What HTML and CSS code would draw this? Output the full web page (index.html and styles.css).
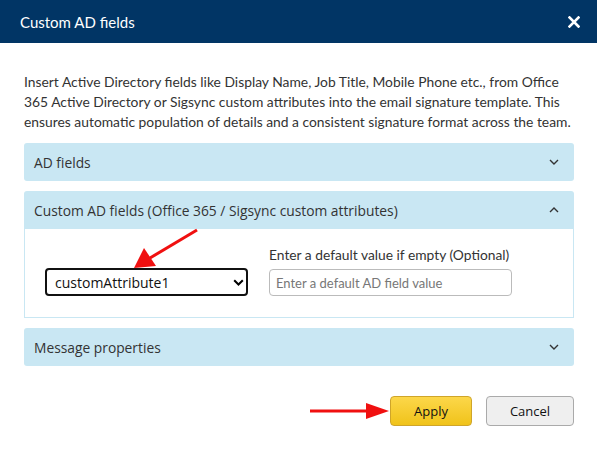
FILE: index.html
```html
<!DOCTYPE html>
<html>
<head>
<meta charset="utf-8">
<link rel="stylesheet" href="styles.css">
</head>
<body>
<div class="modal">
  <div class="modal-header">
    <span class="modal-title">Custom AD fields</span>
    <svg class="close" width="12" height="12" viewBox="0 0 12 12"><path d="M1.5 1.5L10.5 10.5M10.5 1.5L1.5 10.5" stroke="#fff" stroke-width="2.6" stroke-linecap="square"/></svg>
  </div>
  <div class="modal-body">
    <p class="intro">Insert Active Directory fields like Display Name, Job Title, Mobile Phone etc., from Office 365 Active Directory or Sigsync custom attributes into the email signature template. This ensures automatic population of details and a consistent signature format across the team.</p>

    <div class="panel">
      <div class="panel-head"><span>AD fields</span><svg class="chev" width="10" height="6" viewBox="0 0 10 6"><path d="M1 1L5 5L9 1" fill="none" stroke="#333" stroke-width="1.4"/></svg></div>
    </div>

    <div class="panel open">
      <div class="panel-head"><span>Custom AD fields (Office 365 / Sigsync custom attributes)</span><svg class="chev" width="10" height="6" viewBox="0 0 10 6"><path d="M1 5L5 1L9 5" fill="none" stroke="#333" stroke-width="1.4"/></svg></div>
      <div class="panel-body">
        <div class="field">
          <div class="select">
            <span>customAttribute1</span>
            <svg width="11" height="7" viewBox="0 0 11 7"><path d="M1.2 1.2L5.5 5.5L9.8 1.2" fill="none" stroke="#000" stroke-width="2"/></svg>
          </div>
        </div>
        <div class="field">
          <label class="label">Enter a default value if empty (Optional)</label>
          <div class="input">Enter a default AD field value</div>
        </div>
      </div>
    </div>

    <div class="panel">
      <div class="panel-head"><span>Message properties</span><svg class="chev" width="10" height="6" viewBox="0 0 10 6"><path d="M1 1L5 5L9 1" fill="none" stroke="#333" stroke-width="1.4"/></svg></div>
    </div>

    <div class="actions">
      <button class="btn btn-apply">Apply</button>
      <button class="btn btn-cancel">Cancel</button>
    </div>
  </div>
  <svg class="arrows" width="597" height="451" viewBox="0 0 597 451">
    <line x1="197" y1="230" x2="150" y2="258" stroke="#f01010" stroke-width="3"/>
    <polygon points="134,268 144,248 156,266" fill="#f01010"/>
    <line x1="310" y1="411" x2="368" y2="411" stroke="#f01010" stroke-width="3"/>
    <polygon points="389,411 366,403 366,419" fill="#f01010"/>
  </svg>
</div>
</body>
</html>
```

FILE: styles.css
```css
* { box-sizing: border-box; }
html, body { margin: 0; padding: 0; background: #fff; }
.modal {
  position: relative;
  width: 597px;
  height: 451px;
  font-family: Lato, "Liberation Sans", sans-serif;
  color: #333;
}
.modal-header {
  height: 43px;
  background: #013565;
  display: flex;
  align-items: center;
  justify-content: space-between;
  padding: 0 17px 0 20px;
}
.modal-title {
  color: #fff;
  font-size: 15px;
  font-family: Lato, sans-serif;
}
.close { display: block; }
.modal-body {
  padding: 29px 23px 0 24px;
}
.intro {
  margin: 0 0 11px 0;
  font-size: 13.85px;
  line-height: 20px;
  color: #333;
}
.panel {
  margin-bottom: 10px;
}
.panel-head {
  height: 38px;
  background: #c9e7f3;
  border-radius: 3px;
  display: flex;
  align-items: center;
  justify-content: space-between;
  padding: 0 15px 0 10px;
  font-family: "Open Sans", "Noto Sans", sans-serif;
  font-size: 13.8px;
  color: #333;
}
.panel.open .panel-head {
  border-radius: 3px 3px 0 0;
}
.panel-body {
  height: 89px;
  border: 1px solid #c9e7f3;
  border-top: none;
  display: flex;
  align-items: flex-end;
  gap: 21px;
  padding: 0 0 21px 20px;
}
.field { display: flex; flex-direction: column; }
.select {
  width: 203px;
  height: 28px;
  border: 2px solid #111;
  border-radius: 4px;
  display: flex;
  align-items: center;
  justify-content: space-between;
  padding: 0 2px 0 8px;
  font-family: "Open Sans", "Noto Sans", sans-serif;
  font-size: 14px;
  color: #111;
}
.label {
  font-size: 13.8px;
  margin: 0 0 6px 0;
  color: #333;
}
.input {
  width: 243px;
  height: 27px;
  border: 1px solid #bbb;
  border-radius: 4px;
  display: flex;
  align-items: center;
  padding: 0 6px;
  font-size: 13px;
  color: #777;
}
.actions {
  display: flex;
  justify-content: flex-end;
  gap: 14px;
  padding-top: 20px;
}
.btn {
  height: 30px;
  border-radius: 4px;
  font-family: "Open Sans", "Noto Sans", sans-serif;
  font-size: 13px;
  color: #111;
  padding: 0;
  margin: 0;
}
.btn-apply {
  width: 82px;
  background: linear-gradient(#fcd74a, #f0c31a);
  border: 1px solid #cfa52a;
}
.btn-cancel {
  width: 88px;
  background: #efefef;
  border: 1px solid #aaa;
}
.arrows {
  position: absolute;
  left: 0;
  top: 0;
  pointer-events: none;
}
```
